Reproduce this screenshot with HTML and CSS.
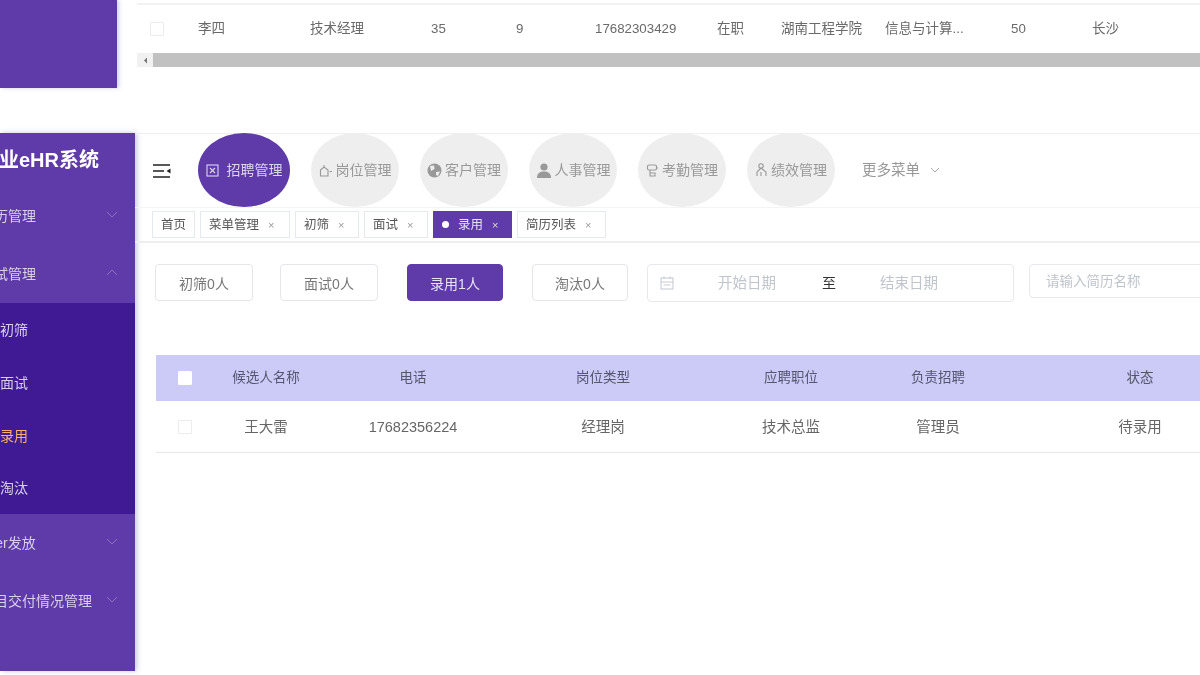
FILE: index.html
```html
<!DOCTYPE html>
<html>
<head>
    <title>eHR系统</title>
    <link rel="stylesheet" href="styles.css">
</head>
<body>
    <div class="page">
        <!-- Recorte superior -->
        <div class="shot-top">
            <div class="side-stub"></div>
            <div class="top-main">
                <div class="top-row">
                    <span class="check"></span>
                    <span>李四</span>
                    <span>技术经理</span>
                    <span class="num">35</span>
                    <span class="num">9</span>
                    <span class="num">17682303429</span>
                    <span>在职</span>
                    <span>湖南工程学院</span>
                    <span>信息与计算...</span>
                    <span class="num">50</span>
                    <span>长沙</span>
                </div>
                <div class="scrollbar">
                    <div class="scroll-btn">
                        <svg width="5" height="7" viewBox="0 0 5 7"><path d="M4 0.5 L1 3.5 L4 6.5 Z" fill="#777"/></svg>
                    </div>
                    <div class="scroll-thumb"></div>
                </div>
            </div>
        </div>

        <!-- Tela principal -->
        <div class="shot-main">
            <div class="sidebar">
                <div class="brand">企业eHR系统</div>
                <div class="menu-item">
                    <span class="menu-label">简历管理</span>
                    <svg class="chev" width="12" height="7" viewBox="0 0 12 7"><path d="M1 1 L6 6 L11 1" /></svg>
                </div>
                <div class="menu-item">
                    <span class="menu-label">面试管理</span>
                    <svg class="chev" width="12" height="7" viewBox="0 0 12 7"><path d="M1 6 L6 1 L11 6" /></svg>
                </div>
                <div class="submenu">
                    <div class="sub-item">初筛</div>
                    <div class="sub-item">面试</div>
                    <div class="sub-item active">录用</div>
                    <div class="sub-item">淘汰</div>
                </div>
                <div class="menu-item">
                    <span class="menu-label">offer发放</span>
                    <svg class="chev" width="12" height="7" viewBox="0 0 12 7"><path d="M1 1 L6 6 L11 1" /></svg>
                </div>
                <div class="menu-item">
                    <span class="menu-label">项目交付情况管理</span>
                    <svg class="chev" width="12" height="7" viewBox="0 0 12 7"><path d="M1 1 L6 6 L11 1" /></svg>
                </div>
            </div>

            <div class="content">
                <div class="navbar">
                    <svg class="hamburger" width="18" height="14" viewBox="0 0 18 14">
                        <path d="M0 1 H17 M0 7 H11 M0 13 H17" stroke="#222" stroke-width="1.6" fill="none"/>
                        <path d="M17.500 4.500 L13.500 7 L17.500 9.500 Z" fill="#222"/>
                    </svg>
                    <div class="nav-circle current">
                        <svg width="13" height="13" viewBox="0 0 13 13" fill="none" stroke="currentColor" stroke-width="1.1"><rect x="1" y="1" width="11" height="11"/><path d="M4 4 L9 9 M9 4 L4 9"/></svg>
                        招聘管理
                    </div>
                    <div class="nav-circle">
                        <svg width="14" height="13" viewBox="0 0 14 13" fill="none" stroke="currentColor" stroke-width="1.100"><path d="M1.500 12 V6 L5 3 L9 6 V12 Z M5 3 V1 M10.500 7.500 H13"/></svg>
                        岗位管理
                    </div>
                    <div class="nav-circle">
                        <svg width="15" height="15" viewBox="0 0 15 15"><circle cx="7.500" cy="7.500" r="7" fill="currentColor"/><path d="M3 3 L7 2.500 L7.500 6 L4 8 Z M9 9 L13 8.500 L11 13 L9 12 Z" fill="#eee"/></svg>
                        客户管理
                    </div>
                    <div class="nav-circle">
                        <svg width="16" height="15" viewBox="0 0 16 15" fill="currentColor"><circle cx="8" cy="4" r="3.600"/><path d="M1 15 C1 10 4 8.500 8 8.500 C12 8.500 15 10 15 15 Z"/></svg>
                        人事管理
                    </div>
                    <div class="nav-circle">
                        <svg width="13" height="13" viewBox="0 0 13 13" fill="none" stroke="currentColor" stroke-width="1.100"><rect x="1.500" y="1" width="9" height="5" rx="1.500"/><path d="M4 6 V12 H9 V9 H4 M12 4 H10"/></svg>
                        考勤管理
                    </div>
                    <div class="nav-circle">
                        <svg width="13" height="14" viewBox="0 0 13 14" fill="none" stroke="currentColor" stroke-width="1.100"><circle cx="6" cy="3" r="2.200"/><path d="M6 5 L2 9 V13 M6 5 L11 9 V13 M6 9 V13"/></svg>
                        绩效管理
                    </div>
                    <div class="more-menu">
                        更多菜单
                        <svg class="more-chev" width="10" height="6" viewBox="0 0 10 6"><path d="M1 1 L5 5 L9 1" /></svg>
                    </div>
                </div>

                <div class="tags">
                    <div class="tag w-home">首页</div>
                    <div class="tag w-menu">菜单管理 <span class="close">×</span></div>
                    <div class="tag w-short">初筛 <span class="close">×</span></div>
                    <div class="tag w-short">面试 <span class="close">×</span></div>
                    <div class="tag w-on on"><i class="dot"></i>录用 <span class="close">×</span></div>
                    <div class="tag w-list">简历列表 <span class="close">×</span></div>
                </div>

                <div class="toolbar">
                    <button class="btn">初筛0人</button>
                    <button class="btn">面试0人</button>
                    <button class="btn primary">录用1人</button>
                    <button class="btn">淘汰0人</button>
                    <div class="date-range">
                        <svg width="14" height="14" viewBox="0 0 14 14" fill="none" stroke="#c8ccd4" stroke-width="1.100"><rect x="1" y="2" width="12" height="11"/><path d="M1 6 H13 M4 0.500 V3 M10 0.500 V3 M3.500 9 H10.500"/></svg>
                        <span class="date-ph start">开始日期</span>
                        <span class="date-sep">至</span>
                        <span class="date-ph end">结束日期</span>
                    </div>
                    <div class="search">请输入简历名称</div>
                </div>

                <div class="table">
                    <div class="t-row t-head">
                        <span class="check white"></span>
                        <span>候选人名称</span>
                        <span>电话</span>
                        <span>岗位类型</span>
                        <span>应聘职位</span>
                        <span>负责招聘</span>
                        <span>状态</span>
                    </div>
                    <div class="t-row t-body">
                        <span class="check"></span>
                        <span>王大雷</span>
                        <span>17682356224</span>
                        <span>经理岗</span>
                        <span>技术总监</span>
                        <span>管理员</span>
                        <span>待录用</span>
                    </div>
                </div>
            </div>
        </div>
    </div>
</body>
</html>
```

FILE: styles.css
```css
html, body {
    margin: 0;
    padding: 0;
    background-color: white;
    overflow: hidden;
}
body {
    width: 1200px;
    height: 675px;
    font-family: "Liberation Sans", "Noto Sans CJK SC", sans-serif;
    color: #666;
}
.page {
    width: 1200px;
    height: 675px;
    overflow: hidden;
    background-color: white;
    line-height: 20px;
    filter: blur(0.45px);
}
.check {
    display: block;
    width: 12px;
    height: 12px;
    border: 1px solid #ececec;
    border-radius: 1px;
    background-color: white;
}

/* Recorte superior */
.shot-top {
    display: flex;
    height: 88px;
}
.side-stub {
    width: 117px;
    flex-shrink: 0;
    background-color: #5f3aa9;
    box-shadow: 2px 0 4px rgba(80, 70, 150, 0.25);
}
.top-main {
    flex: 1;
    margin-left: 20px;
    padding-top: 3px;
}
.top-row {
    display: grid;
    grid-template-columns: 61px 112px 121px 85px 79px 122px 64px 104px 126px 81px 100px;
    align-items: center;
    height: 47px;
    border-top: 2px solid #f2f2f2;
    font-size: 13.500px;
    color: #6a6a6a;
}
.top-row .check {
    margin-left: 13px;
}
.top-row .num {
    font-size: 13.300px;
}
.scrollbar {
    display: flex;
    height: 14px;
    margin-top: 1px;
    background-color: #f1f1f1;
}
.scroll-btn {
    width: 16px;
    display: flex;
    align-items: center;
    justify-content: center;
}
.scroll-thumb {
    flex: 1;
    background-color: #c1c1c1;
}

/* Tela principal */
.shot-main {
    display: flex;
    height: 538px;
    margin-top: 45px;
}
.sidebar {
    width: 135px;
    flex-shrink: 0;
    overflow: hidden;
    background-color: #5f3aa9;
    box-shadow: 2px 0 5px rgba(80, 70, 150, 0.3);
    color: #d8d0ea;
    font-size: 14px;
}
.brand {
    height: 54px;
    line-height: 54px;
    margin-left: -21px;
    width: 170px;
    font-size: 20px;
    font-weight: bold;
    color: white;
    white-space: nowrap;
}
.menu-item {
    display: flex;
    align-items: center;
    justify-content: space-between;
    height: 58px;
    padding-right: 17px;
}
.menu-label {
    margin-left: -20px;
    white-space: nowrap;
}
.chev {
    fill: none;
    stroke: #8d72c6;
    stroke-width: 1;
    margin-top: -4px;
}
.submenu {
    background-color: #3f1a94;
    height: 211px;
}
.sub-item {
    height: 52.750px;
    line-height: 55px;
}
.sub-item.active {
    color: #f4b26c;
}
.content {
    flex: 1;
    min-width: 0;
}
.navbar {
    display: flex;
    align-items: center;
    gap: 21px;
    height: 74px;
    box-shadow: inset 0 1px 0 #efefef;
}
.hamburger {
    margin-left: 18px;
    margin-right: 6px;
    margin-top: 2px;
    flex-shrink: 0;
}
.nav-circle {
    display: flex;
    align-items: center;
    justify-content: center;
    gap: 3px;
    width: 88px;
    height: 74px;
    flex-shrink: 0;
    border-radius: 50%;
    background-color: #eeeeee;
    color: #999;
    font-size: 14px;
    white-space: nowrap;
}
.nav-circle.current {
    width: 92px;
    background-color: #5f3aa9;
    color: #dcd5f0;
    gap: 8px;
}
.more-menu {
    display: flex;
    align-items: center;
    gap: 10px;
    margin-left: 6px;
    color: #999;
    font-size: 14.500px;
    white-space: nowrap;
}
.more-chev {
    fill: none;
    stroke: #aaa;
    stroke-width: 1;
}
.tags {
    display: flex;
    gap: 5px;
    height: 36px;
    padding: 3px 0 0 17px;
    box-sizing: border-box;
    border-top: 1px solid #f4f4f4;
    border-bottom: 2px solid #eeeeee;
}
.tag {
    display: flex;
    align-items: center;
    gap: 9px;
    height: 27px;
    padding-left: 8px;
    box-sizing: border-box;
    border: 1px solid #e6e9ef;
    font-size: 12.500px;
    color: #555;
    white-space: nowrap;
}
.w-home {
    width: 43px;
}
.w-menu {
    width: 90px;
}
.w-short {
    width: 64px;
}
.w-on {
    width: 79px;
}
.w-list {
    width: 89px;
}
.tag.on {
    background-color: #5f3aa9;
    border-color: #5f3aa9;
    color: #e6e0f4;
}
.dot {
    width: 7px;
    height: 7px;
    border-radius: 50%;
    background-color: white;
}
.close {
    font-size: 11px;
    color: #999;
}
.tag.on .close {
    color: #ddd;
}
.toolbar {
    display: flex;
    align-items: flex-start;
    padding: 21px 0 0 20px;
    width: 1200px;
}
.btn {
    width: 98px;
    height: 37px;
    margin-right: 27px;
    padding: 0;
    border: 1px solid #e4e6ec;
    border-radius: 4px;
    background-color: white;
    color: #777;
    font-family: inherit;
    font-size: 14px;
}
.btn.primary {
    width: 96px;
    margin-left: 2px;
    margin-right: 29px;
    background-color: #5f3aa9;
    border-color: #5f3aa9;
    color: #e8e2f6;
}
.btn:nth-child(4) {
    width: 96px;
    margin-right: 19px;
}
.date-range {
    display: flex;
    align-items: center;
    width: 367px;
    height: 38px;
    box-sizing: border-box;
    padding-left: 12px;
    margin-right: 15px;
    border: 1px solid #e8e9ee;
    border-radius: 4px;
    flex-shrink: 0;
}
.date-ph {
    color: #c0c4cc;
    font-size: 14.500px;
    white-space: nowrap;
}
.date-ph.start {
    margin-left: 44px;
}
.date-sep {
    margin-left: 46px;
    color: #333;
    font-size: 14px;
}
.date-ph.end {
    margin-left: 44px;
}
.search {
    width: 300px;
    height: 34px;
    line-height: 33px;
    box-sizing: border-box;
    padding-left: 16px;
    flex-shrink: 0;
    border: 1px solid #e8e9ee;
    border-radius: 4px;
    color: #c0c4cc;
    font-size: 13.500px;
}
.table {
    margin: 53px 0 0 21px;
    width: 1134px;
}
.t-row {
    display: grid;
    grid-template-columns: 60px 100px 194px 186px 190px 104px 300px;
    align-items: center;
    text-align: center;
}
.t-row .check {
    margin-left: 22px;
}
.t-head {
    height: 46px;
    background-color: #cccbf8;
    color: #55556f;
    font-size: 13.500px;
}
.t-head .check.white {
    border-color: white;
}
.t-body {
    height: 52px;
    box-sizing: border-box;
    border-bottom: 1px solid #e8e8ec;
    color: #666;
    font-size: 14.500px;
}
```
